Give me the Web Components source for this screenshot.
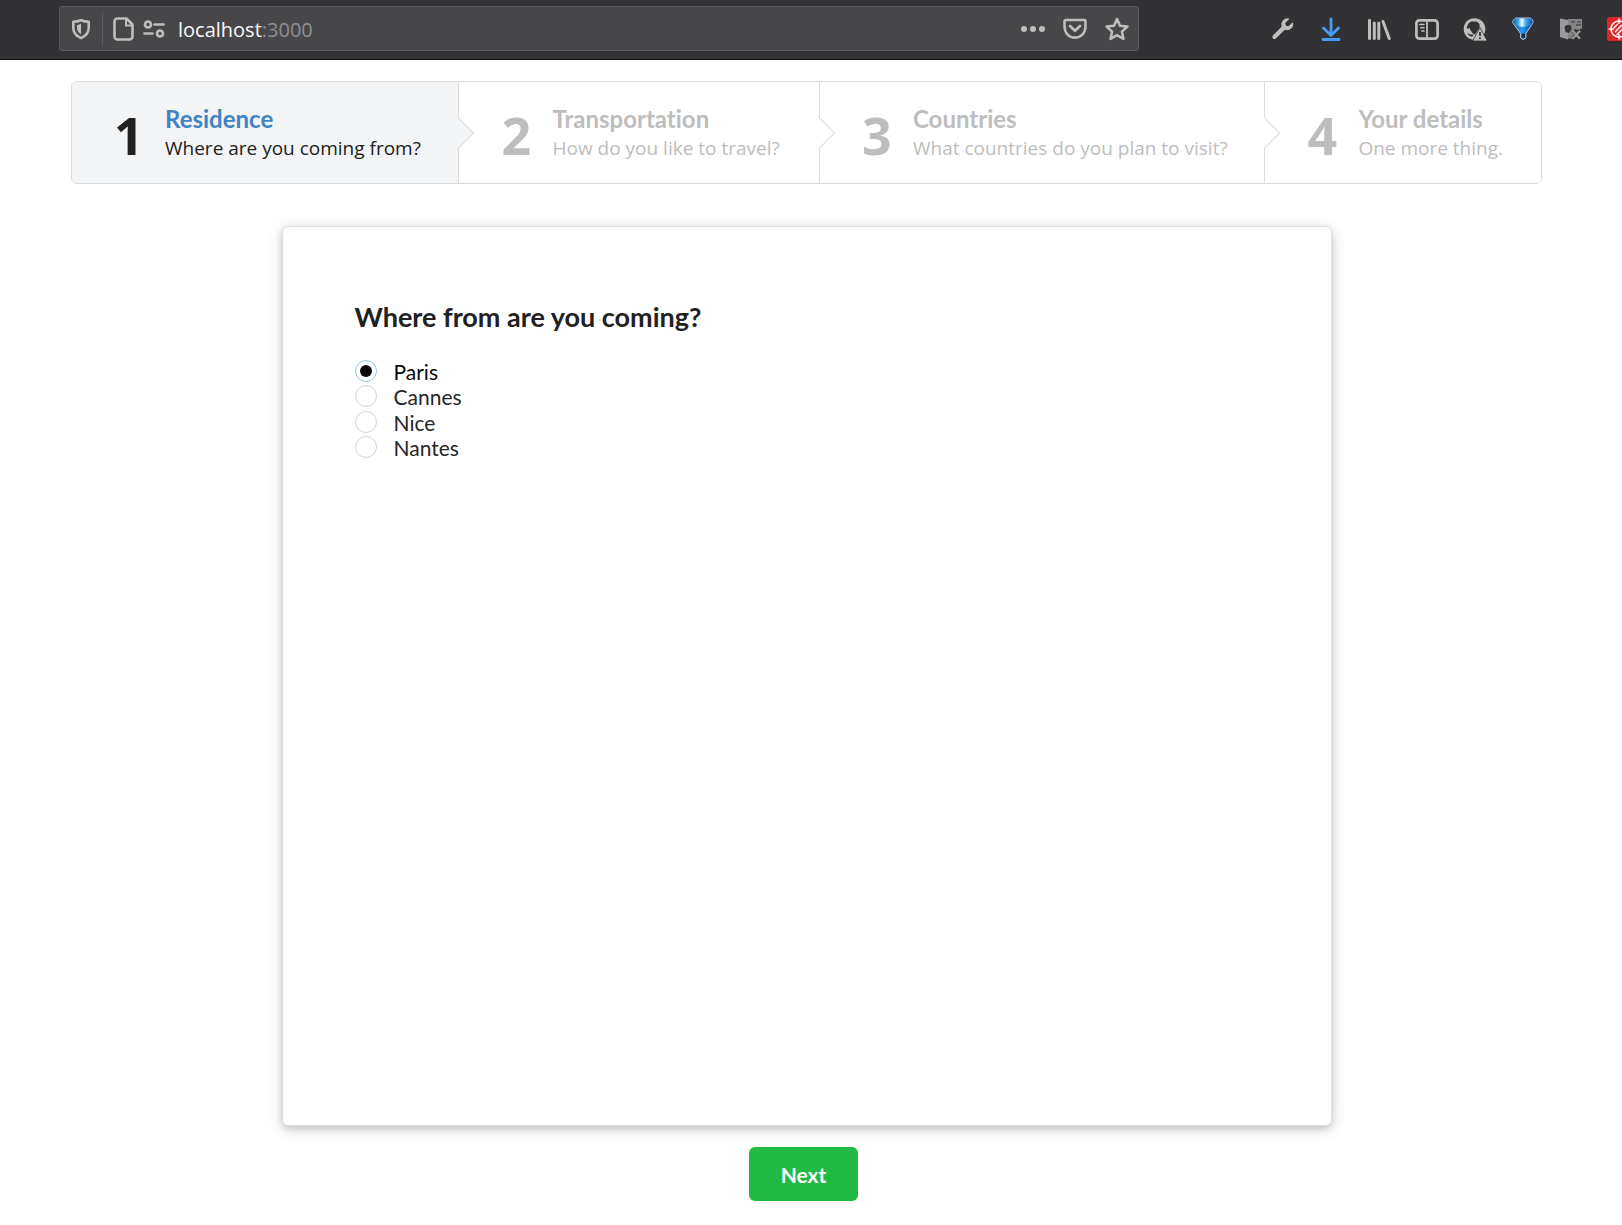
<!DOCTYPE html>
<html lang="en">
<head>
<meta charset="utf-8">
<title>Travel survey</title>
<style>
  body { margin: 0; background: #fff; color: #212121; font-family: Lato, "Liberation Sans", sans-serif; font-size: 21px; font-variant-ligatures: none; }
</style>
</head>
<body>
<browser-bar host="localhost" port=":3000"></browser-bar>
<survey-page>
  <step-list slot="steps">
    <step-item number="1" active><span slot="title">Residence</span><span slot="description">Where are you coming from?</span></step-item>
    <step-item number="2"><span slot="title">Transportation</span><span slot="description">How do you like to travel?</span></step-item>
    <step-item number="3"><span slot="title">Countries</span><span slot="description">What countries do you plan to visit?</span></step-item>
    <step-item number="4" last><span slot="title">Your details</span><span slot="description">One more thing.</span></step-item>
  </step-list>
  <survey-card>
    <span slot="heading">Where from are you coming?</span>
    <radio-list options="Paris,Cannes,Nice,Nantes" value="Paris"></radio-list>
  </survey-card>
  <next-button slot="actions">Next</next-button>
</survey-page>

<script>
const define = (name, render) => customElements.define(name, class extends HTMLElement {
  constructor() { super(); this.attachShadow({ mode: 'open' }); }
  connectedCallback() { this.shadowRoot.innerHTML = render(this); }
});

const icons = {
  shield: '<path d="M12 3.200c2.700 1 5 1.500 7.700 1.600v6.200c0 4.700-2.900 7.900-7.700 10.200-4.800-2.300-7.700-5.500-7.700-10.200V4.800c2.700-.1 5-.6 7.700-1.600z" fill="none" stroke="currentColor" stroke-width="2.600" stroke-linejoin="round"/><path d="M12 6.800v10.400c-2.600-1.500-4-3.500-4-6.200V8c1.400-.2 2.800-.6 4-1.200z" fill="currentColor"/>',
  page: '<path d="M5.500 1.500h9l6 6v12a3 3 0 0 1-3 3h-12a3 3 0 0 1-3-3v-15a3 3 0 0 1 3-3z" fill="none" stroke="currentColor" stroke-width="2.600" stroke-linejoin="round"/><path d="M14 2v6.500h6" fill="none" stroke="currentColor" stroke-width="2"/>',
  permissions: '<g fill="none" stroke="currentColor" stroke-width="2.700" stroke-linecap="round"><circle cx="6" cy="7.500" r="3"/><path d="M12.500 7.500h9M2.500 16.500h8"/><circle cx="18" cy="16.500" r="3"/></g>',
  dots: '<g fill="currentColor"><circle cx="3" cy="12" r="3"/><circle cx="12" cy="12" r="3"/><circle cx="21" cy="12" r="3"/></g>',
  pocket: '<path d="M2 2.800h20c.6 0 1 .4 1 1V10c0 6.500-4.900 11.400-11 11.400S1 16.500 1 10V3.800c0-.6.4-1 1-1z" fill="none" stroke="currentColor" stroke-width="2.700" transform="translate(.6 .3) scale(.95)"/><path d="M7 9l5 4.800L17 9" fill="none" stroke="currentColor" stroke-width="2.700" stroke-linecap="round" stroke-linejoin="round"/>',
  star: '<path d="M12 2l3 6.800 7.400.8-5.500 5 1.500 7.200-6.400-3.700-6.400 3.700 1.500-7.200-5.500-5 7.400-.8z" fill="none" stroke="currentColor" stroke-width="2.600" stroke-linejoin="round"/>',
  wrench: '<path d="M21.800 5.200l-4.300 4-2.600-.5-.6-2.700 4.200-4.200a6 6 0 0 0-7.700 7.800L1.900 18.500a2 2 0 0 0 2.900 2.900l9.100-8.700a6 6 0 0 0 7.900-7.500z" fill="currentColor"/>',
  download: '<path d="M12 2v16M4.500 11l7.500 7.500 7.500-7.500M4 22.500h16" fill="none" stroke="#459bf5" stroke-width="2.800" stroke-linecap="round" stroke-linejoin="round"/>',
  library: '<g fill="none" stroke="currentColor" stroke-width="3" stroke-linecap="round"><path d="M2.500 3.300v18.200M7.300 6v15.500M11.800 6v15.500M16 4.500l6.200 17"/></g>',
  sidebar: '<rect x="1.400" y="3.400" width="21.200" height="18.200" rx="3" fill="none" stroke="currentColor" stroke-width="2.700"/><path d="M12 3v19" stroke="currentColor" stroke-width="1.800"/><path d="M4.800 7.500H9M5.800 10.800H9M6.800 14H9" stroke="currentColor" stroke-width="1.500" stroke-linecap="round"/>',
  account: '<circle cx="11.500" cy="12" r="10.800" fill="currentColor"/><path d="M7.500 6.500c2-2.500 6.300-2.800 8.300-.3 1.500 2 1.200 4-.1 5.800L12 17.500c-1.500-.5-3-1.500-3.500-3-1.800-1.500-2.300-5.500-1-8z" fill="#323234"/><path d="M10.500 4c-4 .2-6.700 3.700-6.700 7.800 1.800-.2 3.500-.8 4.700-2 .1-2.500.8-4.300 2-5.800z" fill="#323234"/><path d="M3.800 15.500c2 1.800 4 2.200 7 2l-1.500 2.300c-2.500-.6-4.500-2-5.500-4.300z" fill="#323234"/><path d="M17 10.500L24.300 24H9.700z" fill="currentColor" stroke="#323234" stroke-width=".8" stroke-linejoin="round"/><path d="M17 15v4" stroke="#323234" stroke-width="1.800"/><circle cx="17" cy="21.200" r="1" fill="#323234"/>',
  gem: '<defs><linearGradient id="gem" x1="0" x2="1" y1="0" y2="0"><stop offset="0" stop-color="#0a5fb0"/><stop offset=".25" stop-color="#3ea4ea"/><stop offset=".45" stop-color="#f2fbff"/><stop offset=".65" stop-color="#45a8ec"/><stop offset="1" stop-color="#0754a8"/></linearGradient><linearGradient id="cone" x1="0" x2="1" y1="0" y2="0"><stop offset="0" stop-color="#0862b6"/><stop offset=".45" stop-color="#2a9af0"/><stop offset="1" stop-color="#06478f"/></linearGradient></defs><path d="M5 1h14c2 .8 3.200 2.600 3.200 4.500L15 16.500v4.200l-3 2-2.500-2v-4.200L1.600 5.500C1.800 3.400 3 1.800 5 1z" fill="url(#cone)" stroke="#b9d3e6" stroke-width=".9" stroke-linejoin="round"/><path d="M5.300 1.500h13.500c1.500.7 2.500 2 2.800 3.700-1 2.700-4.500 4.600-9.600 4.600S3.400 7.900 2.200 5.200c.3-1.700 1.500-3 3.100-3.700z" fill="url(#gem)"/><path d="M10.500 16.500h3.500v3.800l-1.800 1.200-1.700-1.200z" fill="#12304d"/>',
  blocked: '<path d="M1 1.500l8 1.500v19.500L1 20z" fill="#9b9b9d"/><path d="M9 2h14v9.500l-4 1.500-3-1-1 9.500H9z" fill="#858587"/><path d="M5.500 9.500L8 8l4 .5.500 4-2.500 3.500-3.500-1z" fill="#323234"/><path d="M12 4.800h4M18 4.800h4M17 8h5" stroke="#48484a" stroke-width="1.300"/><path d="M14 14l7 7.500M21 14l-7 7.500" stroke="#323234" stroke-width="3.600"/><path d="M13.500 13.800l7.500 8M21 13.800l-7.500 8" stroke="#98989a" stroke-width="2.300"/>',
  target: '<rect width="24" height="24" rx="3" fill="#de2527"/><g fill="none" stroke="#fff" stroke-width="1.500"><circle cx="12" cy="12" r="8"/><path d="M12 1.500V7M12 17v5.500M1.500 12H7M17 12h5.500M8 15l7-7M9.500 18l8-8M6.800 11l4-4"/></g>'
};

define('tool-icon', el => `
  <style>
    :host { display: block; flex: none; }
    button { display: block; width: 24px; height: 24px; margin: 0; padding: 0; border: 0; background: none; color: inherit; }
    svg { display: block; width: 24px; height: 24px; }
  </style>
  <button type="button" aria-label="${el.getAttribute('name')}"><svg viewBox="0 0 24 24" aria-hidden="true">${icons[el.getAttribute('name')]}</svg></button>`);

const toolIcons = names => names.map(n => `<tool-icon name="${n}"></tool-icon>`).join('');

define('browser-bar', el => `
  <style>
    :host { display: flex; align-items: center; box-sizing: border-box; height: 60px; padding: 0 0 2px 59px; background: #323234; border-bottom: 1px solid #0c0c0d; color: #bebebf; overflow: hidden; }
    .field { display: flex; align-items: center; flex: 1; box-sizing: border-box; height: 45px; padding: 0 9px; background: #474749; border: 1px solid #5b5b5d; border-radius: 3px; }
    .divider { width: 1px; height: 32px; margin: 0 9px; background: #5e5e60; }
    .site { display: flex; gap: 6px; }
    .url { flex: 1; margin-left: 12px; padding-top: 2px; font: 20px/28px "Open Sans", "Noto Sans", sans-serif; color: #8f8f93; }
    .host { color: #f9f9fa; }
    .actions { display: flex; gap: 18px; }
    .tools { display: flex; flex: none; gap: 24px; width: 351px; margin-left: 132px; }
  </style>
  <div class="field">
    ${toolIcons(['shield'])}<div class="divider"></div>
    <div class="site">${toolIcons(['page', 'permissions'])}</div>
    <div class="url"><span class="host">${el.getAttribute('host')}</span><span>${el.getAttribute('port')}</span></div>
    <div class="actions">${toolIcons(['dots', 'pocket', 'star'])}</div>
  </div>
  <div class="tools">${toolIcons(['wrench', 'download', 'library', 'sidebar', 'account', 'gem', 'blocked', 'target'])}</div>`);

define('survey-page', () => `
  <style>
    :host { display: block; padding: 21px 80px 24px 71px; }
    .actions { display: flex; justify-content: center; padding-right: 6px; margin-top: 21px; }
  </style>
  <slot name="steps"></slot>
  <main><slot></slot></main>
  <div class="actions"><slot name="actions"></slot></div>`);

define('step-list', () => `
  <style>
    :host { display: grid; grid-template-columns: 388fr 361fr 446fr 276fr; box-sizing: border-box; height: 103px; border: 1px solid #d9dbdc; border-radius: 6px; }
  </style>
  <slot></slot>`);

define('step-item', el => `
  <style>
    :host { position: relative; display: flex; align-items: center; gap: 20px; box-sizing: border-box; min-width: 0; padding-left: 42px; border-right: 1px solid #d9dbdc; background: #fff; color: #bdbdbd; white-space: nowrap; }
    :host([active]) { background: #f3f4f5; color: #212121; border-radius: 5px 0 0 5px; }
    :host([last]) { border-right: 0; border-radius: 0 5px 5px 0; }
    :host::after { content: ""; position: absolute; z-index: 2; top: 50%; right: 0; width: 23px; height: 23px; box-sizing: border-box; background: inherit; border: solid #d9dbdc; border-width: 0 1px 1px 0; transform: translate(50%, -50%) rotate(-45deg); }
    :host([last])::after { display: none; }
    .number { width: 31px; padding-top: 4px; font: 700 52px/54px "Open Sans", "Noto Sans", sans-serif; }
    .title { font: 700 24px/30px Lato, sans-serif; font-variant-ligatures: none; }
    :host([active]) .title { color: #4183c4; }
    .description { font: 19px/28px "Open Sans", "Noto Sans", sans-serif; }
  </style>
  <div class="number">${el.getAttribute('number')}</div>
  <div>
    <div class="title"><slot name="title"></slot></div>
    <div class="description"><slot name="description"></slot></div>
  </div>`);

define('survey-card', () => `
  <style>
    :host { display: block; box-sizing: border-box; max-width: 1050px; min-height: 900px; margin: 42px auto 0; padding: 73px 72px; background: #fff; border: 1px solid #dcdddd; border-radius: 6px; box-shadow: 0 3px 6px rgba(34,36,38,.16), 0 3px 15px rgba(34,36,38,.16); }
    h3 { margin: 0 0 24px; font: 700 27px/34px Lato, sans-serif; }
  </style>
  <h3><slot name="heading"></slot></h3>
  <slot></slot>`);

define('radio-list', el => `
  <style>
    :host { display: block; }
    fieldset { display: grid; grid-auto-rows: 1fr; height: 102px; margin: 0; padding: 0; border: 0; min-width: 0; }
    label { display: flex; align-items: center; gap: 17px; width: max-content; line-height: 22px; color: #262626; }
    label span { padding-top: 2px; }
    input { appearance: none; display: grid; place-items: center; box-sizing: border-box; width: 22px; height: 22px; margin: 0; border: 1px solid #d4d4d5; border-radius: 50%; background: #fff; }
    input:checked { border-color: #96c8da; }
    input:checked::before { content: ""; width: 12px; height: 12px; border-radius: 50%; background: #0a0a0a; }
    input:checked + span { color: #0a0a0a; }
  </style>
  <fieldset>${el.getAttribute('options').split(',').map(o => `
    <label for="${o}"><input type="radio" id="${o}" name="city" value="${o}"${o === el.getAttribute('value') ? ' checked' : ''}><span>${o}</span></label>`).join('')}
  </fieldset>`);

define('next-button', () => `
  <style>
    :host { display: block; }
    button { display: block; height: 54px; padding: 2px 32px 0; border: 0; border-radius: 6px; background: #21ba45; color: #fff; font: 700 21px/24px Lato, sans-serif; }
  </style>
  <button type="button"><slot></slot></button>`);
</script>
</body>
</html>
